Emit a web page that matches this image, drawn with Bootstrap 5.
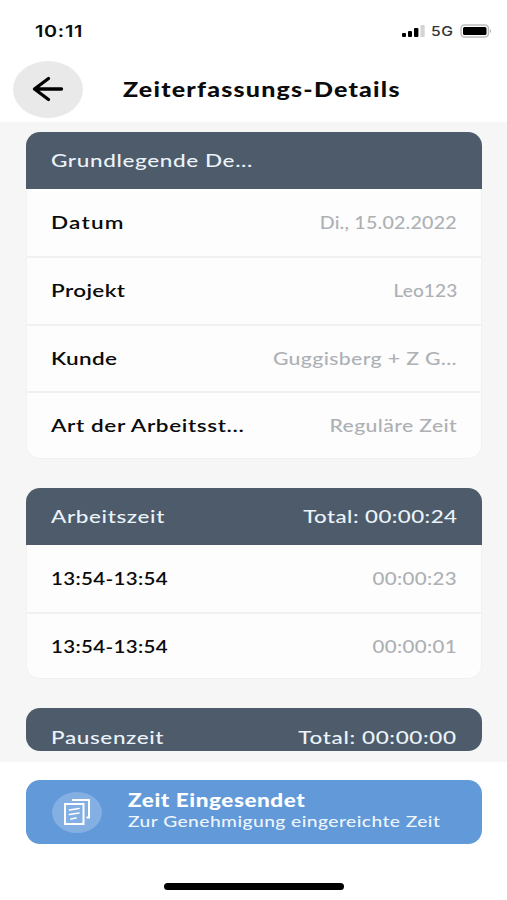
<!DOCTYPE html>
<html lang="de">
<head>
<meta charset="utf-8">
<meta name="viewport" content="width=device-width, initial-scale=1">
<title>Zeiterfassungs-Details</title>
<link href="https://cdn.jsdelivr.net/npm/bootstrap@5.3.0/dist/css/bootstrap.min.css" rel="stylesheet">
<style>
  body { font-family: Lato, "Open Sans", sans-serif; font-size: 18px; line-height: 1.2; background: #fff; color: #0b0b0b; }
  .screen { height: 900px; }
  .status { height: 61px; padding: 1px 14px 0 35px; }
  .clock { font: 600 16.5px Inter, sans-serif; --sx: 1.2; --ls: .6px; }
  .net { font: 500 13.5px Inter, sans-serif; --sx: 1.16; width: 22px; margin: 0 7px 0 6px; color: #333; }
  .topbar { height: 61px; padding: 0 0 5px 13px; }
  .back { width: 70px; height: 57px; border-radius: 50%; background: #e9e9e9; }
  .heading { font-size: 20px; font-weight: 900; margin-left: 40px; --sx: 1.25; --ls: .97px; }
  .scroll-area { height: 640px; background: #f6f6f6; padding: 10px 25px 0 26px; }
  .panel { border-radius: 14px; background: #fdfdfd; box-shadow: inset 0 0 0 1px #f1f1f1; }
  .panel + .panel { margin-top: 29px; }
  .panel-head { height: 57px; padding: 1px 25px 0; background: #4e5b6a; color: #eaf3fa; font-weight: 500; }
  .panel-cut { height: 43px; }
  .entry { height: 67.4px; padding: 1px 25px 0; }
  .entry + .entry { border-top: 2px solid #f1f1f1; padding-top: 0; }
  .label-text { font-weight: 600; }
  .value-text { color: #adb0b4; font-weight: 500; }
  /* wide lettering: horizontal stretch plus tracking */
  .wide { display: inline-block; white-space: nowrap; transform: scaleX(var(--sx, 1.25)); transform-origin: left center; letter-spacing: var(--ls, .5px); }
  .wide-end { transform-origin: right center; }
  .s-123 { --sx: 1.06; --ls: .1px; }
  .s-date { --sx: 1.09; --ls: .2px; }
  .s-time { --sx: 1.14; --ls: .3px; }
  .s-val { --sx: 1.18; --ls: .3px; }
  .s-tight { --ls: .3px; }
  .s-open { --ls: 1px; }
  .s-total { --ls: .35px; --sx: 1.24; }
  .submitted { height: 64px; margin: 18px 25px 0 26px; padding-left: 26px; border-radius: 14px; background: #6199d9; color: #fff; }
  .doc-icon { width: 50px; height: 41px; border-radius: 50%; background: #83afe3; }
  .notice { margin: 0 0 3px 26px; }
  .notice-title { font-weight: 900; line-height: 21px; --ls: .45px; }
  .notice-sub { font-size: 15.5px; font-weight: 500; line-height: 20px; color: #edf5fd; --ls: .35px; --sx: 1.24; }
  .home-bar { width: 180px; height: 7px; margin-top: 39px; background: #000; }
</style>
<script src="https://cdn.jsdelivr.net/npm/bootstrap@5.3.0/dist/js/bootstrap.bundle.min.js"></script>
</head>
<body>
<div class="screen d-flex flex-column overflow-hidden">
  <div class="status d-flex align-items-center justify-content-between">
    <span class="clock wide">10:11</span>
    <div class="d-flex align-items-center">
      <svg width="24" height="14" viewBox="-1 0 24 14"><rect x="0" y="9" width="4" height="4" rx="1"/><rect x="6" y="7" width="4" height="6" rx="1"/><rect x="12" y="4" width="4.4" height="9" rx="1"/><rect x="18.5" y="1" width="4.2" height="12" rx="1" fill="#d4d4d4"/></svg>
      <span class="net wide">5G</span>
      <svg width="33" height="14" viewBox="0 0 33 14"><rect x="1" y="1" width="27.5" height="12" rx="3.5" fill="#fff" stroke="#bdbdbd" stroke-width="1.5"/><rect x="3" y="3" width="23.5" height="8" rx="1.5"/><path d="M30 5q2 2 0 4z" fill="#aaa"/></svg>
    </div>
  </div>
  <header class="topbar d-flex align-items-center">
    <button class="back btn p-0 border-0 d-flex align-items-center justify-content-center" aria-label="Zurück">
      <svg width="32" height="26" viewBox="0 0 32 26" fill="none" stroke="#000" stroke-width="3.3" stroke-linecap="round" stroke-linejoin="round"><path d="M29.5 13H2.5M16.5 2.5L2.5 13L16.5 23.5"/></svg>
    </button>
    <h1 class="heading wide mb-0">Zeiterfassungs-Details</h1>
  </header>
  <main class="scroll-area">
    <section class="panel overflow-hidden">
      <div class="panel-head d-flex align-items-center"><span class="wide">Grundlegende De...</span></div>
      <div class="entry d-flex align-items-center justify-content-between"><span class="label-text wide s-open">Datum</span><span class="value-text wide wide-end s-date">Di., 15.02.2022</span></div>
      <div class="entry d-flex align-items-center justify-content-between"><span class="label-text wide s-tight">Projekt</span><span class="value-text wide wide-end s-123">Leo123</span></div>
      <div class="entry d-flex align-items-center justify-content-between"><span class="label-text wide s-tight">Kunde</span><span class="value-text wide wide-end s-val">Guggisberg + Z G...</span></div>
      <div class="entry d-flex align-items-center justify-content-between"><span class="label-text wide">Art der Arbeitsst...</span><span class="value-text wide wide-end s-val">Reguläre Zeit</span></div>
    </section>
    <section class="panel overflow-hidden">
      <div class="panel-head d-flex align-items-center justify-content-between"><span class="wide">Arbeitszeit</span><span class="wide wide-end s-total">Total: 00:00:24</span></div>
      <div class="entry d-flex align-items-center justify-content-between"><span class="label-text wide s-time">13:54-13:54</span><span class="value-text wide wide-end s-time">00:00:23</span></div>
      <div class="entry d-flex align-items-center justify-content-between"><span class="label-text wide s-time">13:54-13:54</span><span class="value-text wide wide-end s-time">00:00:01</span></div>
    </section>
    <section class="panel panel-cut overflow-hidden">
      <div class="panel-head d-flex align-items-center justify-content-between"><span class="wide">Pausenzeit</span><span class="wide wide-end">Total: 00:00:00</span></div>
    </section>
  </main>
  <div class="submitted d-flex align-items-center">
    <div class="doc-icon d-flex align-items-center justify-content-center">
      <svg width="28" height="28" viewBox="0 0 28 28" fill="none" stroke="#fff" stroke-width="2"><path d="M2 6H20.5V26H2ZM9 2H26V19.5H23.5"/><path d="M6.5 12L16 10.5M6.5 16.5L16 15M8 21L13 20" stroke-linecap="round" stroke-width="1.7"/></svg>
    </div>
    <div class="notice d-flex flex-column align-items-start">
      <span class="notice-title wide">Zeit Eingesendet</span>
      <span class="notice-sub wide">Zur Genehmigung eingereichte Zeit</span>
    </div>
  </div>
  <div class="home-bar rounded-pill mx-auto"></div>
</div>
</body>
</html>
